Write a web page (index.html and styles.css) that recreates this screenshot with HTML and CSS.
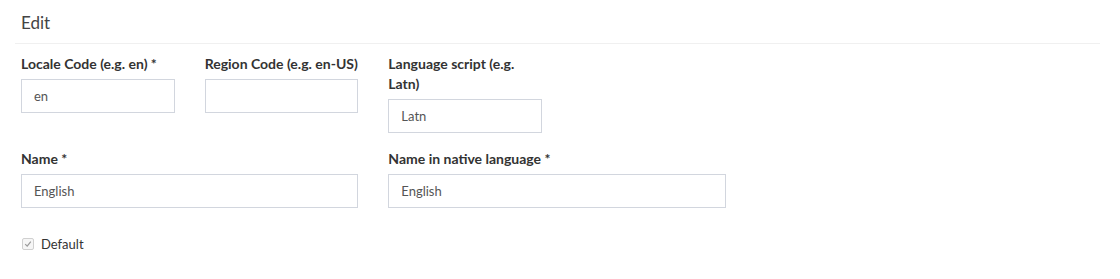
FILE: index.html
```
<!DOCTYPE html>
<html>
<head>
    <link rel="stylesheet" href="styles.css">
</head>
<body>
    <div class="box">
        <div class="box-header">
            <h3 class="box-title">Edit</h3>
        </div>

        <div class="box-body">
            <div class="form-row">
                <div class="form-group col-1">
                    <label>Locale Code (e.g. en) *</label>
                    <input class="form-control" type="text" value="en">
                </div>
                <div class="form-group col-1">
                    <label>Region Code (e.g. en-US)</label>
                    <input class="form-control" type="text" value="">
                </div>
                <div class="form-group col-1">
                    <label>Language script (e.g. Latn)</label>
                    <input class="form-control" type="text" value="Latn">
                </div>
            </div>

            <div class="form-row">
                <div class="form-group col-2">
                    <label>Name *</label>
                    <input class="form-control" type="text" value="English">
                </div>
                <div class="form-group col-2">
                    <label>Name in native language *</label>
                    <input class="form-control" type="text" value="English">
                </div>
            </div>

            <div class="form-row">
                <div class="checkbox col-2">
                    <span class="check-box">
                        <svg width="8" height="8" viewBox="0 0 8 8"><path d="M1.2 4.2 L3.2 6.2 L6.8 1.6" fill="none" stroke="#9a9a9a" stroke-width="1.2"/></svg>
                    </span>
                    <span class="check-label">Default</span>
                </div>
            </div>
        </div>
    </div>
</body>
</html>
```

FILE: styles.css
```
body {
    margin: 0;
    font-family: Lato, "Open Sans", sans-serif;
    font-size: 14px;
    line-height: 20px;
    color: #333;
    background: #fff;
}

.box-header {
    margin: 0 20px 0 15px;
    padding: 10px 6px 9px;
    border-bottom: 1px solid #f0f0f0;
    height: 24px;
}

.box-title {
    margin: 0;
    font-size: 17px;
    font-weight: normal;
    line-height: 26px;
    color: #444;
}

.box-body {
    padding-top: 10px;
}

.form-row {
    display: grid;
    grid-template-columns: repeat(6, 1fr);
    margin: 0 12px 0 6px;
}

.col-1 {
    grid-column: span 1;
    padding: 0 15px;
}

.col-2 {
    grid-column: span 2;
    padding: 0 15px;
}

.form-group {
    margin-bottom: 16px;
}

label {
    display: block;
    margin-bottom: 5px;
    font-weight: bold;
    font-size: 14px;
}

.form-control {
    display: block;
    box-sizing: border-box;
    width: 100%;
    height: 34px;
    padding: 6px 12px;
    border: 1px solid #d2d6de;
    border-radius: 0;
    font-family: Lato, "Open Sans", sans-serif;
    font-size: 13px;
    color: #555;
    outline: none;
}

.checkbox {
    display: flex;
    align-items: center;
    margin-top: 10px;
    padding-left: 16px;
}

.check-box {
    display: flex;
    align-items: center;
    justify-content: center;
    width: 10px;
    height: 10px;
    border: 1px solid #d0d0d0;
    border-radius: 2px;
    background: #f6f6f6;
    margin-right: 7px;
}

.check-label {
    font-size: 13px;
    color: #333;
}
```
